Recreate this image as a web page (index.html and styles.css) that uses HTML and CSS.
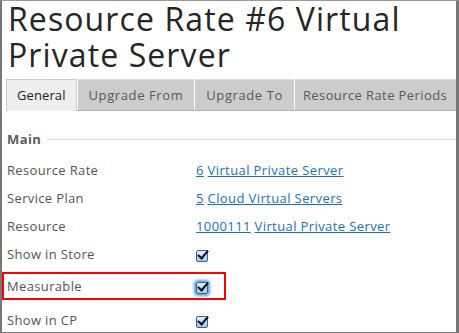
FILE: index.html
```html
<!DOCTYPE html>
<html lang="en">
<head>
    <meta charset="UTF-8">
    <title>Resource Rate #6 Virtual Private Server</title>
    <link rel="stylesheet" href="styles.css">
</head>
<body>
    <div class="frame">
        <h1 class="title">Resource Rate #6 Virtual Private Server</h1>

        <ul class="tabs">
            <li class="tab active">General</li>
            <li class="tab">Upgrade From</li>
            <li class="tab">Upgrade To</li>
            <li class="tab">Resource Rate Periods</li>
        </ul>

        <div class="section">
            <div class="section-head"><span>Main</span></div>

            <div class="row">
                <div class="label">Resource Rate</div>
                <div class="value"><a href="#">6</a> <a href="#">Virtual Private Server</a></div>
            </div>
            <div class="row">
                <div class="label">Service Plan</div>
                <div class="value"><a href="#">5</a> <a href="#">Cloud Virtual Servers</a></div>
            </div>
            <div class="row">
                <div class="label">Resource</div>
                <div class="value"><a href="#">1000111</a> <a href="#">Virtual Private Server</a></div>
            </div>
            <div class="row">
                <div class="label">Show in Store</div>
                <div class="value"><span class="check"></span></div>
            </div>
            <div class="row marked">
                <div class="label">Measurable</div>
                <div class="value"><span class="check glow"></span></div>
            </div>
            <div class="row">
                <div class="label">Show in CP</div>
                <div class="value"><span class="check"></span></div>
            </div>
        </div>
    </div>
</body>
</html>
```

FILE: styles.css
```css
body {
    margin: 0;
    font-family: 'Open Sans', 'DejaVu Sans', sans-serif;
    background: #fff;
}

.frame {
    width: 459px;
    height: 333px;
    box-sizing: border-box;
    border-top: 1px solid #999;
    border-left: 2px solid #777;
    border-right: 3px solid #777;
    border-bottom: 1px solid #777;
    padding-left: 4px;
    overflow: hidden;
}

.title {
    margin: 0 0 0 2px;
    font-size: 32px;
    font-weight: 400;
    line-height: 36px;
    color: #262626;
    letter-spacing: 1.1px;
}

.tabs {
    list-style: none;
    margin: 6px 0 0 0;
    padding: 0;
    display: flex;
    border-bottom: 1px solid #b5b5b5;
}

.tab {
    background: #ccc;
    color: #595959;
    font-size: 13px;
    letter-spacing: 0.6px;
    white-space: nowrap;
    height: 30px;
    line-height: 30px;
    padding: 0 11px;
    margin-right: 1px;
    border-top: 1px solid #ddd;
}

.tab:last-child {
    flex: 1;
    margin-right: 0;
    letter-spacing: 0.4px;
    padding: 0 8px;
}

.tab.active {
    background: #eee;
    color: #222;
    letter-spacing: 0.1px;
    padding: 0 10px;
    border: 1px solid #ccc;
    border-bottom: none;
    margin-bottom: -1px;
    height: 31px;
}

.section {
    padding-top: 19px;
}

.section-head {
    display: flex;
    align-items: center;
    height: 18px;
    font-weight: 700;
    font-size: 13px;
    letter-spacing: 0.4px;
    color: #5e5e5e;
    margin: 0 0 8px 1px;
}

.section-head::after {
    content: "";
    flex: 1;
    border-top: 1px solid #ddd;
    margin-left: 6px;
}

.row {
    display: flex;
    align-items: center;
    height: 28px;
    font-size: 13px;
    letter-spacing: 0.35px;
    color: #555;
}

.label {
    width: 190px;
    padding-left: 1px;
    box-sizing: border-box;
}

.value a {
    color: #1a6fc9;
    letter-spacing: 0.4px;
}

.check {
    display: inline-block;
    width: 10px;
    height: 10px;
    border: 1px solid #3a5f8a;
    border-radius: 2px;
    background: linear-gradient(#dcefff, #9ccbf2);
    position: relative;
    vertical-align: middle;
}

.check::after {
    content: "";
    position: absolute;
    left: 3px;
    top: -3px;
    width: 4px;
    height: 9px;
    border-right: 2px solid #111;
    border-bottom: 2px solid #111;
    transform: rotate(40deg);
}

.check.glow {
    box-shadow: 0 0 3px 2px #5aa0e0;
}

.marked {
    box-sizing: border-box;
    width: 224px;
    height: 28px;
    margin: 4px 0 6px -4px;
    padding-left: 2px;
    border: 2px solid #f00;
}
```
